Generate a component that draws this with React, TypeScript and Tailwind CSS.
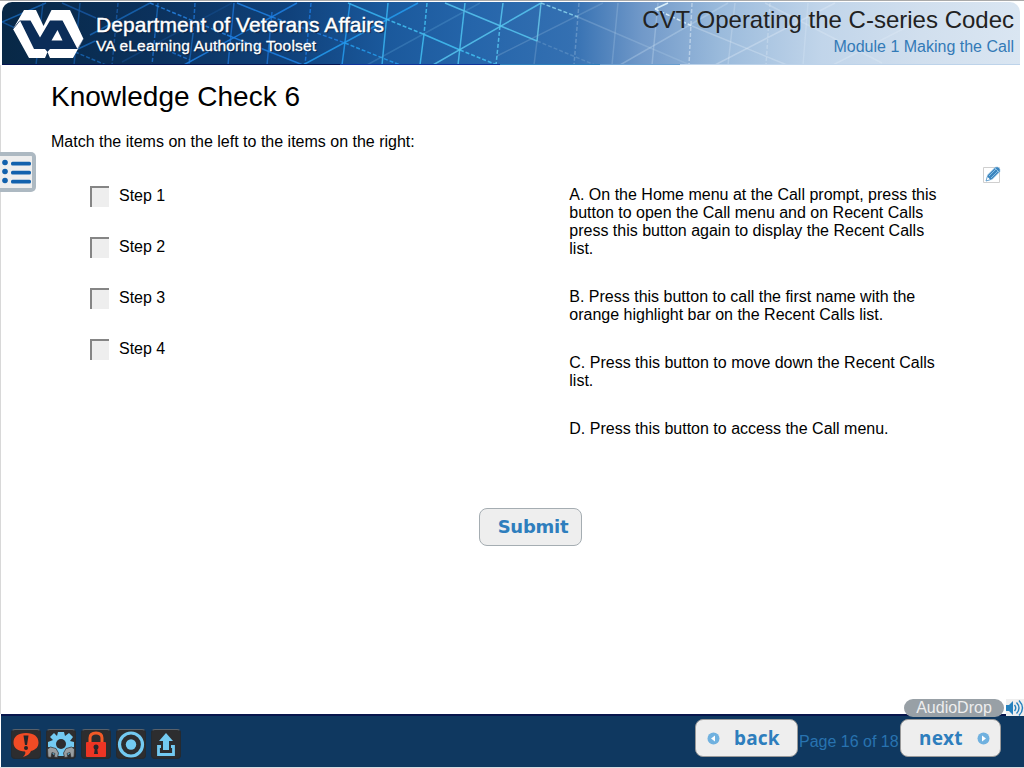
import React from "react";

type Line = [number, number, number, number, string, boolean?, number?];

const lines: Line[] = [
  [2, 22, 46, 3, "#1765b4"],
  [2, 22, 26, 33, "#12539a"],
  [43, 3, 36, 65, "#12539a"],
  [80, 3, 74, 65, "#12539a"],
  [118, 3, 112, 65, "#17569f", true],
  [158, 3, 155, 34, "#1765b4"],
  [155, 34, 152, 65, "#1c70cd", true],
  [195, 3, 193, 34, "#1c70cd", true],
  [193, 34, 189, 65, "#1765b4"],
  [234, 3, 228, 65, "#1c70cd"],
  [272, 12, 267, 65, "#1c70cd"],
  [311, 3, 305, 65, "#1c78dd", true],
  [75, 52, 106, 65, "#1765b4", true],
  [62, 3, 96, 18, "#17569f"],
  [122, 62, 232, 3, "#164f91", false, 0.5],
  [90, 35, 150, 3, "#1765b4"],
  [78, 49, 95, 41, "#1765b4"],
  [150, 3, 227, 35, "#2580de", true],
  [150, 43, 190, 60, "#1c70cd", true],
  [227, 35, 303, 65, "#1e80e3"],
  [184, 65, 297, 3, "#1e80e3"],
  [237, 3, 272, 17, "#1e80e3"],
  [272, 17, 345, 43, "#1e80e3", true],
  [303, 65, 418, 3, "#249bef"],
  [345, 43, 400, 65, "#269cec", true],
  [350, 3, 342, 65, "#249bef"],
  [348, 3, 386, 19, "#38b5f2"],
  [386, 19, 423, 34, "#42bff2", true],
  [423, 34, 460, 50, "#42bff2"],
  [460, 50, 497, 65, "#42bff2", true],
  [388, 3, 382, 65, "#38b5f2"],
  [427, 3, 424, 34, "#42bff2", true],
  [424, 34, 420, 65, "#42bff2"],
  [465, 3, 458, 65, "#4dc3f0"],
  [445, 3, 537, 41, "#57c6ef"],
  [433, 65, 541, 3, "#57c6ef"],
  [503, 3, 500, 26, "#57c6ef"],
  [500, 26, 496, 65, "#57c6ef", true],
  [541, 3, 537, 41, "#68c7e9"],
  [541, 3, 578, 17, "#89d3ef", true],
  [537, 41, 595, 65, "#8db7dc", true, 0.3],
  [537, 41, 534, 65, "#8db7dc", false, 0.3],
  [367, 65, 480, 3, "#60a5d7", false, 0.3],
  [497, 56, 603, 3, "#8db7dc", false, 0.3],
  [579, 3, 574, 65, "#a8c9e6", true, 0.35],
  [578, 17, 690, 65, "#b9d2eb", false, 0.25],
  [618, 3, 612, 65, "#b9d2eb", false, 0.25],
  [658, 3, 652, 65, "#d1e4f4", false, 0.3],
  [620, 65, 728, 3, "#d1e4f4", false, 0.3],
  [655, 9, 668, 3, "#e8faff"],
  [655, 9, 692, 26, "#e8faff", true, 0.8],
  [692, 3, 689, 65, "#e4effa", true, 0.5],
  [692, 26, 787, 65, "#e4effa", false, 0.3],
  [715, 65, 835, 3, "#e4effa", false, 0.35],
  [735, 3, 728, 65, "#e4effa", false, 0.25],
  [765, 3, 882, 63, "#e4effa", false, 0.3],
  [770, 3, 766, 65, "#e4effa", true, 0.3],
  [808, 3, 803, 65, "#e4effa", false, 0.25],
  [833, 65, 930, 15, "#e4effa", false, 0.3],
];

function Banner() {
  return (
    <header className="relative ml-[2px] h-[63px] w-[1018px] overflow-hidden rounded-t-[10px] bg-[linear-gradient(90deg,#082846_0px,#0b315c_150px,#10427c_290px,#1a589b_380px,#2565aa_470px,#3470b2_570px,#7199c9_640px,#9bbbdc_720px,#c1d5ea_820px,#d1dfee_920px,#dae6f2_1018px)]">
      <svg className="absolute left-[-2px] top-[-2px] h-[67px] w-[1024px]" viewBox="0 0 1024 67" fill="none">
        {lines.map(([x1, y1, x2, y2, stroke, dashed, opacity], i) => (
          <line key={i} x1={x1} y1={y1} x2={x2} y2={y2} stroke={stroke} strokeWidth="1.500" strokeDasharray={dashed ? "4 2" : undefined} opacity={opacity ?? 0.85} />
        ))}
        <path d="M2 64.500H340" stroke="#051452" />
        <path d="M340 64.500H500" stroke="#10349a" />
        <path d="M500 64.500H600" stroke="#2f7fbd" />
        <path d="M600 64.500H680" stroke="#6a9fd0" />
        <path d="M680 64.500H1020" stroke="#bdd3ea" />
        <path d="M24 10H36L43.500 26L51.500 10H70L83.500 39L78 49L73 58H50L47.500 52L45 58H29L13 29Z" fill="white" />
        <path d="M20 20.500H30.500L40 37.500L50 20.500H62.500L77.500 49H50L47.500 52L45 49H34Z" fill="#0b2d58" />
        <path d="M20 20.500L13 29" stroke="#0b2d58" strokeWidth=".8" />
        <path d="M77.500 49L83.500 39" stroke="#0b2d58" strokeWidth=".5" />
        <path d="M57.500 30L62.500 40.500H51.500Z" fill="white" />
      </svg>
      <div className="relative flex justify-between">
        <div className="pl-[94px] pt-[11px] font-['Liberation_Sans',sans-serif] text-white [text-shadow:1px_1px_1px_#061c3d]">
          <div className="whitespace-nowrap text-[21px] leading-[24px] tracking-[0.08px] [-webkit-text-stroke:0.4px_white]">Department of Veterans Affairs</div>
          <div className="whitespace-nowrap text-[15.500px] leading-[17px] tracking-[0.18px] [-webkit-text-stroke:0.3px_white]">VA eLearning Authoring Toolset</div>
        </div>
        <div className="pr-[6px] pt-[4px] text-right">
          <div className="whitespace-nowrap text-[24px] leading-[28px] text-[#222]">CVT Operating the C-series Codec</div>
          <div className="text-[16px] leading-[26px] text-[#337ab7]">Module 1 Making the Call</div>
        </div>
      </div>
    </header>
  );
}

function MenuButton() {
  return (
    <button aria-label="Menu" className="absolute left-0 top-[151px] h-[40px] w-[36px] rounded-r-[5px] border-y-[4px] border-r-[4px] border-[#adb9c2] bg-[#eee]">
      <svg className="h-[32px] w-[32px]" viewBox="0 0 32 32">
        {[6.5, 15.5, 24.5].map((y) => (
          <g key={y} fill="#1261ad">
            <circle cx="5" cy={y} r="2.800" />
            <rect x="11" y={y - 0.7} width="20" height="3.700" rx="1.500" />
          </g>
        ))}
      </svg>
    </button>
  );
}

function Tool({ label, children }: { label: string; children: React.ReactNode }) {
  return (
    <button aria-label={label} className="h-[30px] w-[30px] rounded-[4px] border border-[#252a30] border-t-[#59616a] bg-[#2d2d2f]">
      <svg className="h-[28px] w-[28px]" viewBox="1 1 28 28">{children}</svg>
    </button>
  );
}

function Tools() {
  return (
    <div className="flex gap-[5px] pl-[10px] pt-[13px]">
      <Tool label="Feedback">
        <path d="M15 4C7 4 2.500 7.800 2.500 13.500S7 22 14 22.500C15 24 14 26 12 28C16 27 19 25 20 22C25 20.500 27.500 18 27.500 13.500C27.500 7.800 23 4 15 4Z" fill="#f14b25" />
        <path d="M12.500 6.500H17.500L16 16H14Z" fill="#242529" /><circle cx="15" cy="19" r="2" fill="#242529" />
      </Tool>
      <Tool label="Settings">
        <path d="M12 3H18L19 7L23 4L27 8L24 12L28 13V18L24 19L26 23L22 26L18 23V27H12V23L8 26L4 22L7 19L2 18V13L7 11L4 8L8 4L11 7Z" fill="#73caf2" />
        <circle cx="15" cy="15" r="5" fill="#2d2d2f" />
        <path d="M1.500 20L4.500 18L10 19.500L12.500 24L11.500 28.500L8 28L9 24.500L6 23.500L5 28.500L2 28ZM28.500 20L25.500 18L20 19.500L17.500 24L18.500 28.500L22 28L21 24.500L24 23.500L25 28.500L28 28Z" fill="#999ea1" stroke="#2d2d2f" strokeWidth=".7" />
      </Tool>
      <Tool label="Lock">
        <path d="M9 14V9Q9 4 15 4T21 9V14" fill="none" stroke="#f35a27" strokeWidth="3" />
        <rect x="5" y="13" width="20" height="15" rx="1" fill="#ee3524" />
        <circle cx="15" cy="18" r="2.500" fill="#25272b" /><path d="M14 18H16L17 25H13Z" fill="#25272b" />
      </Tool>
      <Tool label="Target">
        <circle cx="15" cy="15.500" r="11.500" fill="none" stroke="#73caf2" strokeWidth="3.200" /><circle cx="15" cy="15.500" r="5.200" fill="#73caf2" />
      </Tool>
      <Tool label="Exit">
        <path d="M15 4L22 12H18V21H12V12H8Z" fill="#73caf2" /><path d="M10 17.500H7.500V25.500H22.500V17.500H20" fill="none" stroke="#73caf2" strokeWidth="2.800" />
      </Tool>
    </div>
  );
}

function Dot({ right = false }: { right?: boolean }) {
  return (
    <svg className="h-[13px] w-[13px]" viewBox="0 0 13 13">
      <circle cx="6.500" cy="6.500" r="6" fill="#70b1df" />
      <path d={right ? "M5 3.500L9 6.500L5 9.500Z" : "M8 3.500L4 6.500L8 9.500Z"} fill="white" />
    </svg>
  );
}

const steps = ["Step 1", "Step 2", "Step 3", "Step 4"];
const answers = [
  ["A. On the Home menu at the Call prompt, press this", "button to open the Call menu and on Recent Calls", "press this button again to display the Recent Calls", "list."],
  ["B. Press this button to call the first name with the", "orange highlight bar on the Recent Calls list."],
  ["C. Press this button to move down the Recent Calls", "list."],
  ["D. Press this button to access the Call menu."],
];

export default function App() {
  return (
    <div className="relative flex h-[768px] w-[1024px] flex-col overflow-hidden border-b border-t border-b-[#d8dce0] border-t-[#aaa] bg-white pt-px font-['Liberation_Sans',Arial,sans-serif] text-[16px] text-black">
      <Banner />
      <main className="flex-1 border-l border-[#d8d8d8] pl-[50px]">
        <h1 className="pt-[16px] text-[28px] leading-[32px]">Knowledge Check 6</h1>
        <p className="mt-[20px] leading-[18px]">Match the items on the left to the items on the right:</p>
        <div className="mt-[35px] flex h-[322px]">
          <div className="flex w-[518.3px] flex-col gap-[30px] pl-[39px]">
            {steps.map((step) => (
              <div className="flex h-[21px] items-start" key={step}>
                <span className="h-[21px] w-[19px] border-l-2 border-t-2 border-[#858585] bg-[#eee]" />
                <span className="ml-[10px] leading-[20px]">{step}</span>
              </div>
            ))}
          </div>
          <div className="flex flex-col gap-[30px]">
            {answers.map((answer) => (
              <p className="leading-[18px]" key={answer[0]}>
                {answer.map((line) => <span className="block whitespace-nowrap" key={line}>{line}</span>)}
              </p>
            ))}
          </div>
        </div>
        <button className="ml-[428px] block h-[38px] w-[103px] rounded-[8px] border border-[#a5adb2] bg-[#eee] pb-px pl-[5px] font-['DejaVu_Sans',sans-serif] text-[18px] font-bold tracking-[-0.25px] text-[#2e7ebd]">Submit</button>
      </main>
      <footer className="ml-px h-[53px] border-t-2 border-[#08164c] bg-[#0f3860]">
        <div className="flex h-[51px] justify-between">
          <Tools />
          <div className="flex pr-[23px] pt-[3px]">
            <button className="flex h-[38px] w-[103px] items-center rounded-[8px] border border-[#999] bg-[#eee] pl-[11px] font-['Noto_Sans',sans-serif] text-[19px] font-bold tracking-[0.2px] text-[#2e7ebd]"><Dot /><span className="ml-[14px]">back</span></button>
            <span className="w-[102px] whitespace-nowrap pl-px pt-[14px] text-[16px] leading-[18px] text-[#2873b0]">Page 16 of 18</span>
            <button className="flex h-[38px] w-[101px] items-center rounded-[8px] border border-[#999] bg-[#eee] pl-[18px] font-['Noto_Sans',sans-serif] text-[19px] font-bold tracking-[0.3px] text-[#2e7ebd]"><span>next</span><span className="ml-auto mr-[10px]"><Dot right /></span></button>
          </div>
        </div>
      </footer>
      <MenuButton />
      <svg className="absolute left-[983px] top-[165px] h-[18px] w-[18px]" viewBox="0 0 18 18">
        <path d="M.5 1.500H16.500V16.500H.5Z" fill="white" stroke="#cfcfcf" />
        <path d="M3 15L4.500 9L12.500 1H15L17 3V5.500L9 13.500Z" fill="#3b85be" stroke="#b4d5ed" strokeWidth=".6" />
        <path d="M6 10L13 3M8 12L15 5M12 2L16 6" stroke="#9bcaec" strokeWidth=".8" />
        <path d="M3 15L4.500 10.500L7.500 13.500Z" fill="white" stroke="#3b85be" strokeWidth=".6" />
      </svg>
      <div className="absolute left-[904px] top-[698px] h-[18px] w-[100px] rounded-full bg-[#98a0a6] text-center text-[16px] leading-[18px] text-[#eee]">AudioDrop</div>
      <svg className="absolute left-[1006px] top-[698px] h-[18px] w-[18px]" viewBox="0 0 18 18">
        <path d="M0 0H18V17H0Z" fill="#eee" /><path d="M0 6H3L7 2V16L3 12H0Z" fill="#2681be" />
        <path d="M8.500 6Q11 9 8.500 12M10.500 3.500Q15.500 9 10.500 14.500M13 1.500Q20 9 13 16.500" fill="none" stroke="#2681be" strokeWidth="1.400" />
      </svg>
    </div>
  );
}
